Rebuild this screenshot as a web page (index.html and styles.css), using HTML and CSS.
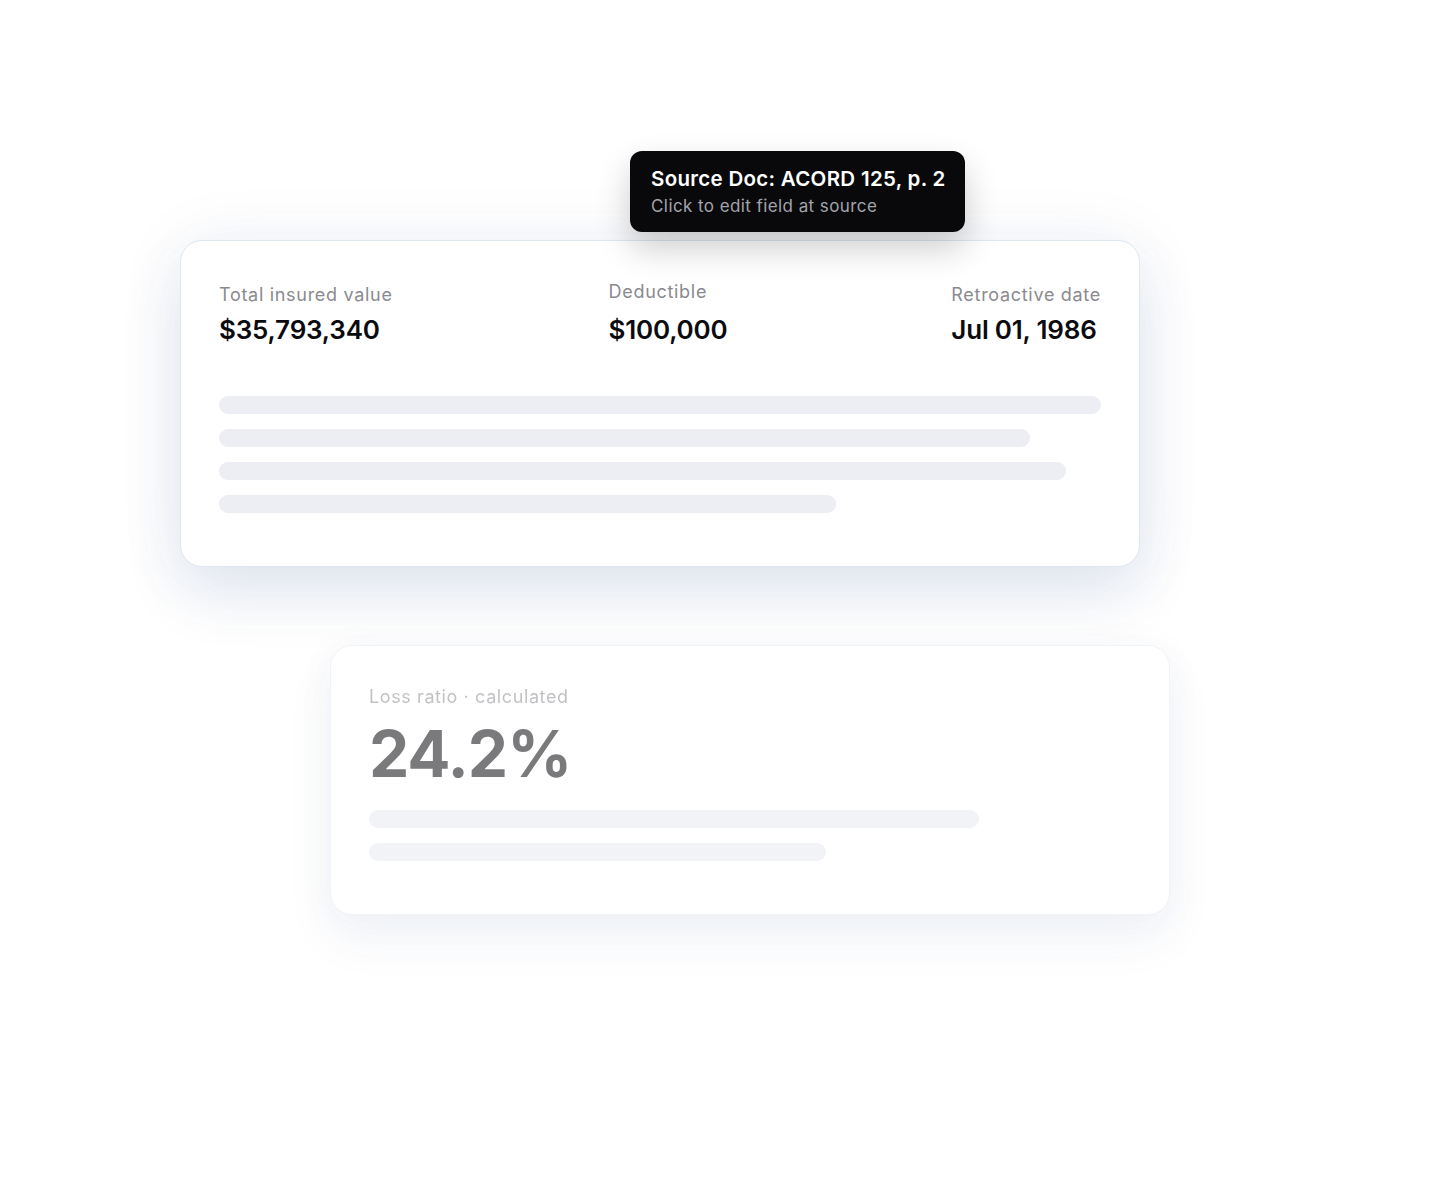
FILE: index.html
```html
<!DOCTYPE html>
<html lang="en">
<head>
<meta charset="utf-8">
<title>Extracted fields</title>
<link rel="stylesheet" href="styles.css">
</head>
<body>
<main class="stage">
  <section class="card card-main">
    <div class="tooltip">
      <div class="tooltip-title">Source Doc: ACORD 125, p. 2</div>
      <div class="tooltip-sub">Click to edit field at source</div>
    </div>
    <div class="fields">
      <div class="field">
        <div class="field-label">Total insured value</div>
        <div class="field-value">$35,793,340</div>
      </div>
      <div class="field field-active">
        <div class="field-label">Deductible</div>
        <div class="field-value">$100,000</div>
      </div>
      <div class="field">
        <div class="field-label">Retroactive date</div>
        <div class="field-value">Jul 01, 1986</div>
      </div>
    </div>
    <div class="lines">
      <div class="line" style="width:100%"></div>
      <div class="line" style="width:92%"></div>
      <div class="line" style="width:96%"></div>
      <div class="line" style="width:70%"></div>
    </div>
  </section>

  <section class="card card-faded">
    <div class="faded-inner">
      <div class="calc-label">Loss ratio · calculated</div>
      <div class="calc-value">24.2%</div>
      <div class="lines lines-small">
        <div class="line line-light" style="width:80%"></div>
        <div class="line line-light" style="width:60%"></div>
      </div>
    </div>
  </section>
</main>
</body>
</html>
```

FILE: styles.css
```css
* { box-sizing: border-box; }

html, body {
  margin: 0;
  padding: 0;
  background: #ffffff;
  font-family: Inter, "Noto Sans", "Liberation Sans", sans-serif;
  color: #0b0b0f;
}

.stage {
  display: flex;
  flex-direction: column;
  align-items: flex-start;
  padding: 240px 0 0 180px;
  min-height: 1200px;
}

.card {
  position: relative;
  background: #ffffff;
  border-radius: 22px;
}

.card-main {
  width: 960px;
  height: 327px;
  padding: 40px 38px 0 38px;
  border: 1px solid #dde8f1;
  box-shadow:
    0 28px 60px rgba(40, 70, 140, 0.11),
    0 4px 70px rgba(40, 70, 140, 0.07);
}

.tooltip {
  position: absolute;
  left: 449px;
  top: -90px;
  width: 335px;
  height: 81px;
  padding: 14px 20px 0 21px;
  background: #09090c;
  border-radius: 12px;
  box-shadow: 0 16px 34px rgba(0, 0, 0, 0.2);
  z-index: 2;
}

.tooltip-title {
  color: #ffffff;
  font-size: 20.5px;
  font-weight: 600;
  line-height: 28px;
  letter-spacing: 0.3px;
  white-space: nowrap;
}

.tooltip-sub {
  color: #a3a3ab;
  font-size: 17px;
  line-height: 26px;
  letter-spacing: 0.42px;
  white-space: nowrap;
}

.fields {
  display: flex;
  justify-content: space-between;
  align-items: flex-start;
}

.field-label {
  color: #8a8a8f;
  font-size: 18px;
  line-height: 27px;
  letter-spacing: 0.7px;
}

.field-active {
  margin-right: 8px;
}

.field-active .field-label {
  margin-top: -3px;
}

.field-value {
  margin-top: 7px;
  color: #0b0b0f;
  font-size: 26px;
  font-weight: 600;
  line-height: 30px;
  letter-spacing: -0.2px;
}

.field-active .field-value {
  margin-top: 10px;
}

.lines {
  display: flex;
  flex-direction: column;
  gap: 15px;
  margin-top: 51px;
}

.line {
  height: 18px;
  border-radius: 9px;
  background: #eceef4;
}

.card-faded {
  width: 840px;
  height: 270px;
  margin: 78px 0 0 150px;
  border: 1px solid #f0f3f8;
  box-shadow:
    0 24px 50px rgba(40, 70, 140, 0.06),
    0 4px 40px rgba(40, 70, 140, 0.04);
}

.faded-inner {
  padding: 39px 38px 0 38px;
  filter: blur(0.7px);
  opacity: 0.62;
}

.calc-label {
  color: #9c9ca2;
  font-size: 18px;
  line-height: 24px;
  letter-spacing: 0.6px;
}

.calc-value {
  margin-top: 9px;
  color: #2a2a2e;
  font-size: 64px;
  font-weight: 700;
  line-height: 72px;
  letter-spacing: -1px;
}

.lines-small {
  margin-top: 20px;
}

.line-light {
  background: #e9ecf3;
}
```
